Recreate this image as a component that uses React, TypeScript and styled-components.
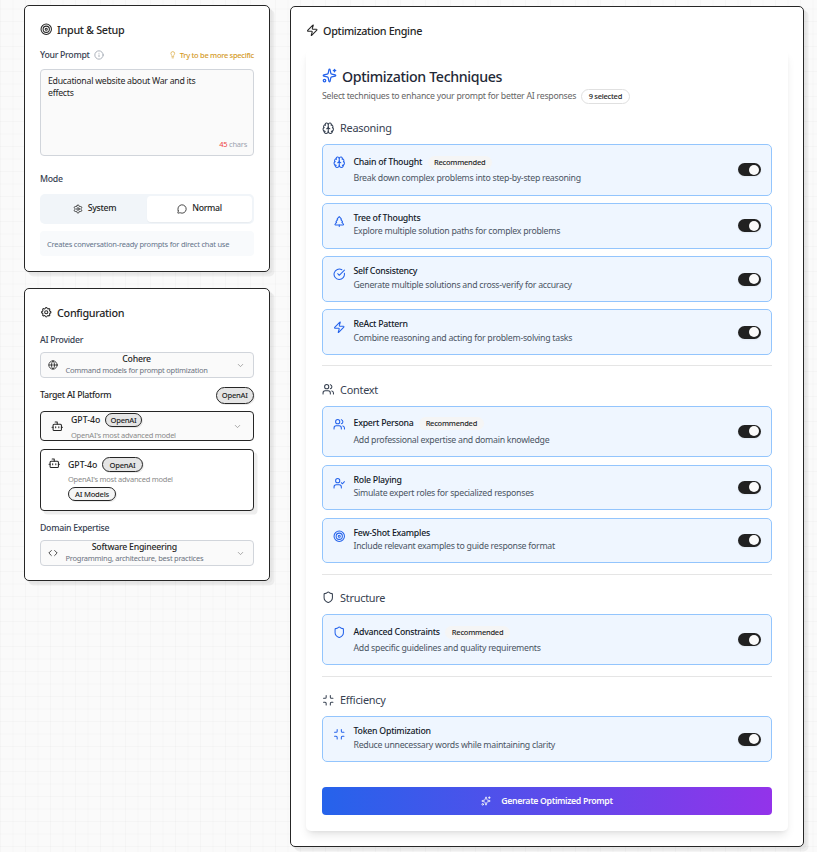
import React from 'react';
import styled, { createGlobalStyle } from 'styled-components';
import {
  Bot, Brain, ChevronDown, CircleCheckBig, Code, Globe, Info, Lightbulb, MessageCircle,
  Minimize, Settings, Shield, Sparkles, Target, TreePine, UserCheck, Users, Zap,
} from 'lucide-react';
import { TbSettings } from 'react-icons/tb';

const GlobalStyle = createGlobalStyle`
  * { box-sizing: border-box; }
  body {
    margin: 0;
    background-color: #fafafa;
    background-image:
      linear-gradient(rgba(0, 0, 0, 0.02) 1px, transparent 1px),
      linear-gradient(90deg, rgba(0, 0, 0, 0.02) 1px, transparent 1px);
    background-size: 12.5px 12.5px;
    background-position: 0 -4px;
    font-family: 'Noto Sans', 'Open Sans', sans-serif;
    font-size: 8.75px;
    letter-spacing: -0.028em;
    color: #262626;
    height: 852px;
    overflow: hidden;
  }
  svg { flex: none; display: block; }
`;

const Page = styled.main`
  display: grid;
  grid-template-columns: 246px 514px;
  column-gap: 20px;
  align-items: start;
  padding: 5px 0 0 24px;
`;

const Sidebar = styled.div`
  display: flex;
  flex-direction: column;
  gap: 16px;
`;

const Card = styled.section<{ $height: number; $top?: number }>`
  display: flex;
  flex-direction: column;
  height: ${p => p.$height}px;
  margin-top: ${p => p.$top ?? 0}px;
  padding: 15px 15px 0;
  border: 1px solid #262626;
  border-radius: 5px;
  background: #fff;
  box-shadow: 2.5px 2.5px 0 rgba(0, 0, 0, 0.03), 4.5px 4.5px 0 rgba(0, 0, 0, 0.05);
`;

const CardTitle = styled.h2`
  display: flex;
  align-items: center;
  gap: 4.6px;
  height: 17px;
  margin: 0 0 1px;
  font-size: 10.8px;
  font-weight: 500;
  letter-spacing: -0.031em;
`;

const FieldHead = styled.div<{ $top: number; $dark?: boolean }>`
  display: flex;
  align-items: center;
  justify-content: space-between;
  height: 18px;
  margin-top: ${p => p.$top}px;
  font-weight: 500;
  letter-spacing: -0.033em;
  color: ${p => (p.$dark ? '#262626' : '#374151')};
`;

const Label = styled.span`
  display: flex;
  align-items: center;
  gap: 4.5px;
  svg { color: #9ca3af; }
`;

const Tip = styled.span`
  display: flex;
  align-items: center;
  gap: 3px;
  font-size: 7.5px;
  font-weight: 500;
  color: #d49a1f;
`;

const PromptBox = styled.div`
  display: flex;
  flex-direction: column;
  justify-content: space-between;
  height: 87px;
  margin-top: 5px;
  padding: 5px 6px 5px 7px;
  border: 1px solid #d1d5db;
  border-radius: 4px;
  background: #fafafa;
  line-height: 12.3px;
`;

const PromptText = styled.p`
  width: 165px;
  margin: 0;
  letter-spacing: -0.03em;
`;

const CharCount = styled.span`
  align-self: flex-end;
  font-size: 7.5px;
  color: #9ca3af;
  b { font-weight: 400; color: #ef4444; }
`;

const Segmented = styled.div`
  display: grid;
  grid-template-columns: 1fr 1fr;
  height: 30px;
  margin-top: 6px;
  padding: 2px;
  border-radius: 5px;
  background: #f1f5f9;
`;

const Segment = styled.button<{ $active?: boolean }>`
  display: flex;
  align-items: center;
  justify-content: center;
  gap: 5px;
  padding: 0 0 2px;
  border: 0;
  border-radius: 4px;
  background: ${p => (p.$active ? '#fff' : 'transparent')};
  box-shadow: ${p => (p.$active ? '0 1px 1px rgba(0,0,0,0.04)' : 'none')};
  font: inherit;
  font-weight: 500;
  letter-spacing: -0.035em;
  color: #262626;
  svg { margin-top: 2px; }
`;

const Hint = styled.p`
  display: flex;
  align-items: center;
  height: 25px;
  margin: 7px 0 0;
  padding-left: 7px;
  border-radius: 4px;
  background: #f8fafc;
  font-size: 7.5px;
  letter-spacing: -0.029em;
  color: #64748b;
`;

const Select = styled.button<{ $strong?: boolean }>`
  display: flex;
  align-items: center;
  height: ${p => (p.$strong ? 30 : 26)}px;
  margin: ${p => (p.$strong ? 7 : 3)}px 0 0;
  padding: 0 ${p => (p.$strong ? 11 : 8)}px 0 ${p => (p.$strong ? 10 : 7)}px;
  border: 1px solid ${p => (p.$strong ? '#262626' : '#d1d5db')};
  border-radius: 4px;
  background: #fafafa;
  font: inherit;
  letter-spacing: inherit;
  color: #262626;
`;

const SelectText = styled.span<{ $left?: boolean }>`
  display: flex;
  flex-direction: column;
  align-items: ${p => (p.$left ? 'flex-start' : 'center')};
  gap: ${p => (p.$left ? 2 : 0)}px;
  margin: ${p => (p.$left ? 2 : 0)}px auto 0 7.5px;
  font-weight: 500;
  line-height: 11.5px;
`;

const Sub = styled.span<{ $muted?: boolean }>`
  font-size: 7.5px;
  font-weight: 400;
  color: ${p => (p.$muted ? '#8a8a8a' : '#6b7280')};
`;

const Chevron = styled(ChevronDown)`
  color: #8f8f8f;
`;

const ModelRow = styled.span`
  display: flex;
  align-items: center;
  gap: 5px;
  height: 15px;
  font-weight: 500;
  letter-spacing: 0;
`;

const Pill = styled.span<{ $light?: boolean; $height?: number; $pad?: number }>`
  display: inline-flex;
  align-items: center;
  height: ${p => p.$height ?? 15}px;
  padding: 0 ${p => p.$pad ?? 6}px;
  border: 1px solid #262626;
  border-radius: 10px;
  background: ${p => (p.$light ? '#f5f5f5' : '#e5e5e5')};
  box-shadow: 1px 1px 0 rgba(0, 0, 0, 0.08);
  font-size: 7.6px;
  font-weight: 500;
  letter-spacing: -0.03em;
`;

const ModelCard = styled.div`
  display: flex;
  align-items: flex-start;
  gap: 7.5px;
  height: 62px;
  margin-top: 8px;
  padding: 7px 7px 0;
  border: 1px solid #262626;
  border-radius: 4px;
  background: #fff;
  box-shadow: 3.5px 3.5px 0 rgba(0, 0, 0, 0.07);
`;

const ModelInfo = styled.div`
  display: flex;
  flex-direction: column;
  align-items: flex-start;
  gap: 2.4px;
`;

const Panel = styled.div`
  display: flex;
  flex-direction: column;
  height: 781px;
  margin-top: 10px;
  padding: 16px 16px 0;
  border-radius: 5px;
  background: #fff;
  box-shadow: 0 6px 10px -2px rgba(0, 0, 0, 0.1), 0 2px 4px -2px rgba(0, 0, 0, 0.08);
`;

const PanelTitle = styled.h3`
  display: flex;
  align-items: center;
  gap: 5px;
  height: 20px;
  margin: 0;
  font-size: 14.2px;
  font-weight: 500;
  letter-spacing: -0.025em;
  color: #1f2937;
  svg { color: #2563eb; margin-bottom: 1px; }
`;

const PanelSub = styled.p`
  display: flex;
  align-items: center;
  gap: 5px;
  height: 15px;
  margin: 2px 0 17.4px;
  letter-spacing: -0.03em;
  color: #666;
`;

const CountPill = styled.span`
  display: flex;
  align-items: center;
  height: 15px;
  margin-top: 1px;
  padding: 0 6.5px;
  border: 1px solid #e0e0e0;
  border-radius: 8px;
  font-size: 7.5px;
  font-weight: 500;
  color: #262626;
`;

const Group = styled.div`
  & + & {
    margin-top: 10.6px;
    padding-top: 15.4px;
    border-top: 1px solid #e5e5e5;
  }
`;

const GroupTitle = styled.h4`
  display: flex;
  align-items: center;
  gap: 5.5px;
  height: 15px;
  margin: 0 0 9px;
  font-size: 10.9px;
  font-weight: 400;
  color: #374151;
`;

const Items = styled.div`
  display: flex;
  flex-direction: column;
  gap: 7.6px;
`;

const Item = styled.div<{ $tall?: boolean }>`
  display: flex;
  align-items: center;
  height: ${p => (p.$tall ? 51.2 : 45.5)}px;
  padding: 0 10px;
  border: 1px solid #93c5fd;
  border-radius: 5px;
  background: #eff6ff;
  > svg { align-self: flex-start; margin-top: 11px; color: #2563eb; }
`;

const ItemBody = styled.div<{ $tall?: boolean }>`
  flex: 1;
  align-self: flex-start;
  padding: ${p => (p.$tall ? 9 : 7.8)}px 0 0 8px;
`;

const ItemTitle = styled.div<{ $tall?: boolean }>`
  display: flex;
  align-items: center;
  gap: 5.5px;
  height: ${p => (p.$tall ? 15 : 12.5)}px;
  margin-bottom: ${p => (p.$tall ? 3 : 1)}px;
  font-weight: 500;
  color: #111827;
`;

const Recommended = styled.span`
  margin-top: 1px;
  padding: 0 6.5px;
  border-radius: 8px;
  background: #f5f5f5;
  font-size: 7.5px;
  line-height: 13px;
  color: #262626;
`;

const ItemText = styled.div`
  line-height: 12.5px;
  letter-spacing: -0.03em;
  color: #4b5563;
`;

const Toggle = styled.span`
  display: flex;
  justify-content: flex-end;
  align-items: center;
  width: 23px;
  height: 13px;
  padding: 0 1.7px;
  border-radius: 7px;
  background: #212121;
  box-shadow: 0 1px 2px rgba(0, 0, 0, 0.06);
  &::after {
    content: '';
    width: 10px;
    height: 10px;
    border-radius: 50%;
    background: #fafafa;
  }
`;

const Generate = styled.button`
  display: flex;
  align-items: center;
  justify-content: center;
  gap: 10px;
  height: 28px;
  margin-top: 25px;
  border: 0;
  border-radius: 4px;
  background: linear-gradient(90deg, #2563eb, #9333ea);
  font: inherit;
  font-weight: 600;
  letter-spacing: -0.04em;
  color: #fafafa;
`;

type Technique = { icon: React.ElementType; name: string; text: string; recommended?: boolean };
type TechniqueGroup = { icon: React.ElementType; name: string; items: Technique[] };

const groups: TechniqueGroup[] = [
  {
    icon: Brain,
    name: 'Reasoning',
    items: [
      { icon: Brain, name: 'Chain of Thought', text: 'Break down complex problems into step-by-step reasoning', recommended: true },
      { icon: TreePine, name: 'Tree of Thoughts', text: 'Explore multiple solution paths for complex problems' },
      { icon: CircleCheckBig, name: 'Self Consistency', text: 'Generate multiple solutions and cross-verify for accuracy' },
      { icon: Zap, name: 'ReAct Pattern', text: 'Combine reasoning and acting for problem-solving tasks' },
    ],
  },
  {
    icon: Users,
    name: 'Context',
    items: [
      { icon: Users, name: 'Expert Persona', text: 'Add professional expertise and domain knowledge', recommended: true },
      { icon: UserCheck, name: 'Role Playing', text: 'Simulate expert roles for specialized responses' },
      { icon: Target, name: 'Few-Shot Examples', text: 'Include relevant examples to guide response format' },
    ],
  },
  {
    icon: Shield,
    name: 'Structure',
    items: [
      { icon: Shield, name: 'Advanced Constraints', text: 'Add specific guidelines and quality requirements', recommended: true },
    ],
  },
  {
    icon: Minimize,
    name: 'Efficiency',
    items: [
      { icon: Minimize, name: 'Token Optimization', text: 'Reduce unnecessary words while maintaining clarity' },
    ],
  },
];

function TechniqueItem({ icon: Icon, name, text, recommended }: Technique) {
  return (
    <Item $tall={recommended}>
      <Icon size={12.5} />
      <ItemBody $tall={recommended}>
        <ItemTitle $tall={recommended}>
          {name}
          {recommended && <Recommended>Recommended</Recommended>}
        </ItemTitle>
        <ItemText>{text}</ItemText>
      </ItemBody>
      <Toggle />
    </Item>
  );
}

export default function App() {
  return (
    <>
      <GlobalStyle />
      <Page>
        <Sidebar>
          <Card $height={267}>
            <CardTitle><Target size={12.5} />Input &amp; Setup</CardTitle>
            <FieldHead $top={7}>
              <Label>Your Prompt <Info size={10} /></Label>
              <Tip><Lightbulb size={7.5} />Try to be more specific</Tip>
            </FieldHead>
            <PromptBox>
              <PromptText>Educational website about War and its effects</PromptText>
              <CharCount><b>45</b> chars</CharCount>
            </PromptBox>
            <FieldHead $top={14}>Mode</FieldHead>
            <Segmented>
              <Segment><Settings size={10} />System</Segment>
              <Segment $active><MessageCircle size={10} />Normal</Segment>
            </Segmented>
            <Hint>Creates conversation-ready prompts for direct chat use</Hint>
          </Card>

          <Card $height={293}>
            <CardTitle><TbSettings size={12.5} />Configuration</CardTitle>
            <FieldHead $top={9}>AI Provider</FieldHead>
            <Select>
              <Globe size={10} />
              <SelectText>Cohere<Sub>Command models for prompt optimization</Sub></SelectText>
              <Chevron size={9} />
            </Select>
            <FieldHead $top={8} $dark>
              Target AI Platform
              <Pill $height={17} $pad={5.2}>OpenAI</Pill>
            </FieldHead>
            <Select $strong>
              <Bot size={12.5} />
              <SelectText $left>
                <ModelRow>GPT-4o<Pill $pad={4} $height={14}>OpenAI</Pill></ModelRow>
                <Sub $muted>OpenAI's most advanced model</Sub>
              </SelectText>
              <Chevron size={9} />
            </Select>
            <ModelCard>
              <Bot size={12.5} />
              <ModelInfo>
                <ModelRow>GPT-4o<Pill>OpenAI</Pill></ModelRow>
                <Sub $muted>OpenAI's most advanced model</Sub>
                <Pill $light $height={14}>AI Models</Pill>
              </ModelInfo>
            </ModelCard>
            <FieldHead $top={8}>Domain Expertise</FieldHead>
            <Select>
              <Code size={10} />
              <SelectText>Software Engineering<Sub>Programming, architecture, best practices</Sub></SelectText>
              <Chevron size={9} />
            </Select>
          </Card>
        </Sidebar>

        <Card $height={841} $top={1}>
          <CardTitle><Zap size={12.5} />Optimization Engine</CardTitle>
          <Panel>
            <PanelTitle><Sparkles size={15} />Optimization Techniques</PanelTitle>
            <PanelSub>
              Select techniques to enhance your prompt for better AI responses
              <CountPill>9 selected</CountPill>
            </PanelSub>
            {groups.map(({ icon: Icon, name, items }) => (
              <Group key={name}>
                <GroupTitle><Icon size={12.5} />{name}</GroupTitle>
                <Items>
                  {items.map(item => <TechniqueItem key={item.name} {...item} />)}
                </Items>
              </Group>
            ))}
            <Generate><Sparkles size={10} />Generate Optimized Prompt</Generate>
          </Panel>
        </Card>
      </Page>
    </>
  );
}
